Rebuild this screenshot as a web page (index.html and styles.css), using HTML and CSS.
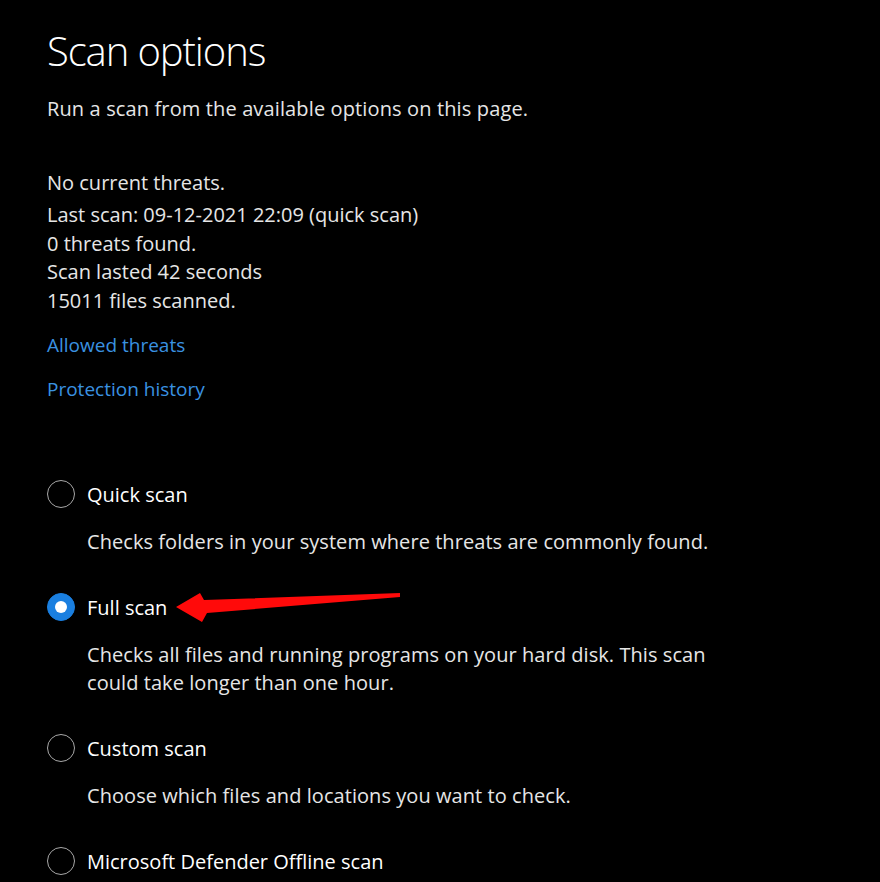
FILE: index.html
```html
<!DOCTYPE html>
<html lang="en">
<head>
<meta charset="utf-8">
<title>Scan options</title>
<link rel="stylesheet" href="styles.css">
</head>
<body>
<main class="page">
  <h1 class="title">Scan options</h1>
  <p class="subtitle">Run a scan from the available options on this page.</p>

  <section class="status">
    <p class="status-head">No current threats.</p>
    <div class="status-lines">
      <p>Last scan: 09-12-2021 22:09 (quick scan)</p>
      <p>0 threats found.</p>
      <p>Scan lasted 42 seconds</p>
      <p>15011 files scanned.</p>
    </div>
    <a class="link" href="#">Allowed threats</a>
    <a class="link" href="#">Protection history</a>
  </section>

  <section class="options">
    <div class="option">
      <div class="radio-row"><span class="radio"></span><span class="label">Quick scan</span></div>
      <p class="desc">Checks folders in your system where threats are commonly found.</p>
    </div>
    <div class="option">
      <div class="radio-row"><span class="radio checked"></span><span class="label">Full scan</span></div>
      <p class="desc">Checks all files and running programs on your hard disk. This scan<br>could take longer than one hour.</p>
    </div>
    <div class="option">
      <div class="radio-row"><span class="radio"></span><span class="label">Custom scan</span></div>
      <p class="desc">Choose which files and locations you want to check.</p>
    </div>
    <div class="option">
      <div class="radio-row"><span class="radio"></span><span class="label">Microsoft Defender Offline scan</span></div>
    </div>
  </section>
</main>
<svg class="arrow" width="880" height="882" viewBox="0 0 880 882" aria-hidden="true">
  <polygon points="176,607 200,593 204,600 400,593 400,597 207,613 202,622" fill="#ff0a0a"/>
</svg>
</body>
</html>
```

FILE: styles.css
```css
html, body {
  margin: 0;
  padding: 0;
  background: #000;
}
body {
  font-family: "Open Sans", "Noto Sans", sans-serif;
  color: #e6e6e6;
  font-size: 20px;
  line-height: 29px;
  position: relative;
  height: 882px;
  overflow: hidden;
}
p { margin: 0; }
.page {
  padding-left: 47px;
  padding-top: 26.5px;
}
.title {
  margin: 0;
  font-size: 40px;
  line-height: 48px;
  font-weight: 300;
  letter-spacing: -1.1px;
  color: #fff;
}
.subtitle {
  margin-top: 19.5px;
  letter-spacing: 0.13px;
}
.status {
  margin-top: 45px;
  display: flex;
  flex-direction: column;
  align-items: flex-start;
}
.status-lines {
  margin-top: 4px;
  line-height: 28.7px;
}
.link {
  color: #3a92e0;
  text-decoration: none;
  margin-top: 15px;
  font-size: 19px;
}
.options {
  margin-top: 76px;
  display: flex;
  flex-direction: column;
  gap: 36px;
}
.radio-row {
  display: flex;
  align-items: center;
  gap: 12px;
  color: #fff;
}
.radio {
  width: 28px;
  height: 28px;
  box-sizing: border-box;
  border: 1.5px solid #a8a8a8;
  border-radius: 50%;
  flex: none;
  display: flex;
  align-items: center;
  justify-content: center;
}
.radio.checked {
  background: #1a7fe0;
  border-color: #1a7fe0;
}
.radio.checked::after {
  content: "";
  width: 12px;
  height: 12px;
  border-radius: 50%;
  background: #fff;
}
.desc {
  margin-top: 19px;
  margin-left: 40px;
  line-height: 28.7px;
  letter-spacing: 0.06px;
}
.arrow {
  position: absolute;
  left: 0;
  top: 0;
  pointer-events: none;
}
```
